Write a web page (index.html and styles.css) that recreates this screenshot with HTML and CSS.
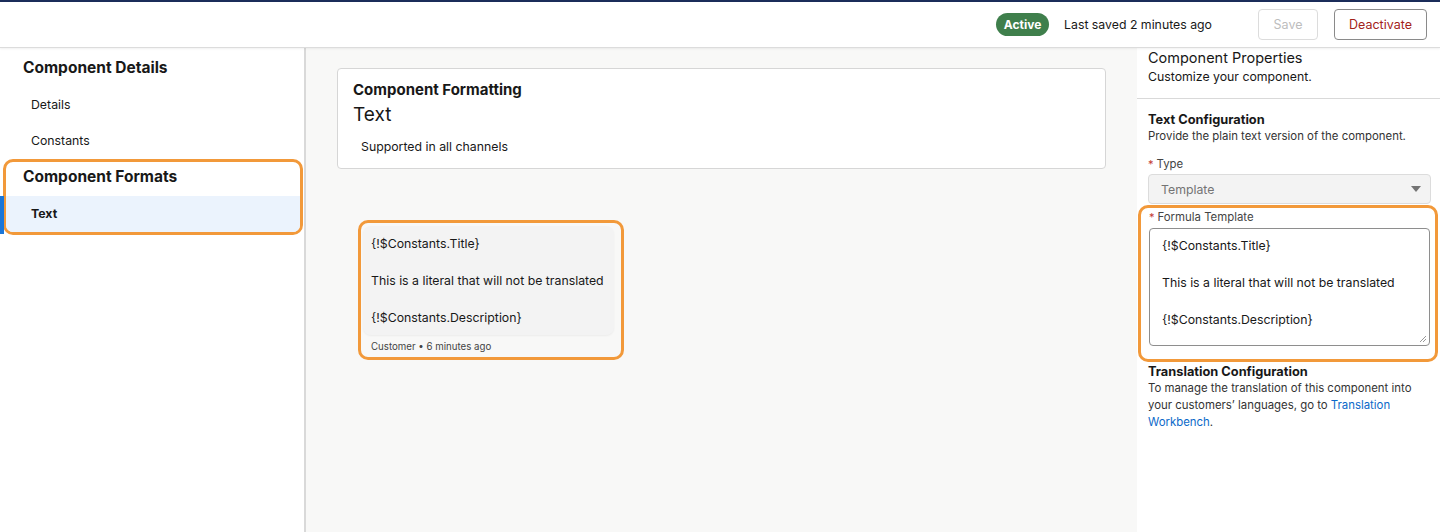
FILE: index.html
```html
<!DOCTYPE html>
<html lang="en">
<head>
    <meta charset="UTF-8">
    <meta name="viewport" content="width=device-width, initial-scale=1.0">
    <title>Component Builder</title>
    <link rel="stylesheet" href="styles.css">
</head>
<body>
    <div class="topbar"></div>
    <header class="header">
        <span class="badge">Active</span>
        <span class="saved">Last saved 2 minutes ago</span>
        <button class="btn btn-save" disabled>Save</button>
        <button class="btn btn-deactivate">Deactivate</button>
    </header>

    <div class="workspace">
        <aside class="sidebar">
            <h2 class="side-title">Component Details</h2>
            <a class="side-item">Details</a>
            <a class="side-item">Constants</a>
            <div class="highlight side-group">
                <h2 class="side-title">Component Formats</h2>
                <a class="side-item active">Text</a>
            </div>
        </aside>

        <main class="canvas">
            <section class="card">
                <h3 class="card-label">Component Formatting</h3>
                <div class="card-title">Text</div>
                <p class="card-note">Supported in all channels</p>
            </section>

            <div class="highlight preview">
                <div class="bubble">
                    <p>{!$Constants.Title}</p>
                    <p>This is a literal that will not be translated</p>
                    <p>{!$Constants.Description}</p>
                </div>
                <div class="bubble-meta">Customer &bull; 6 minutes ago</div>
            </div>
        </main>

        <aside class="props">
            <div class="props-head">
                <h2>Component Properties</h2>
                <p>Customize your component.</p>
            </div>
            <div class="props-body">
                <h3 class="section-title">Text Configuration</h3>
                <p class="section-text">Provide the plain text version of the component.</p>

                <label class="field-label"><span class="req">*</span>Type</label>
                <div class="select">
                    <span>Template</span>
                    <svg width="12" height="8" viewBox="0 0 12 8"><path d="M1 1h10L6 7z" fill="#747474"/></svg>
                </div>

                <div class="highlight formula">
                    <label class="field-label"><span class="req">*</span>Formula Template</label>
                    <div class="textarea">
                        <p>{!$Constants.Title}</p>
                        <p>This is a literal that will not be translated</p>
                        <p>{!$Constants.Description}</p>
                        <svg class="grip" width="8" height="8" viewBox="0 0 8 8"><path d="M7 1L1 7M7 4L4 7" stroke="#999" stroke-width="1"/></svg>
                    </div>
                </div>

                <h3 class="section-title">Translation Configuration</h3>
                <p class="section-text">To manage the translation of this component into your customers&rsquo; languages, go to <a class="link">Translation</a><br><a class="link">Workbench</a>.</p>
            </div>
        </aside>
    </div>
</body>
</html>
```

FILE: styles.css
```css
* {
    margin: 0;
    padding: 0;
    box-sizing: border-box;
}

body {
    font-family: Inter, "Liberation Sans", Arial, sans-serif;
    color: #181818;
    background-color: #fff;
    height: 532px;
    overflow: hidden;
}

.topbar {
    height: 2px;
    background-color: #1b2d5a;
}

.header {
    height: 46px;
    display: flex;
    align-items: center;
    justify-content: flex-end;
    padding-right: 13px;
    border-bottom: 1px solid #dcdcdc;
    box-shadow: 0 1px 2px rgba(0, 0, 0, 0.06);
    position: relative;
}

.badge {
    background-color: #3f7f4c;
    color: #fff;
    font-size: 12px;
    font-weight: 700;
    height: 23px;
    line-height: 23px;
    width: 53px;
    text-align: center;
    border-radius: 12px;
    margin-right: 15px;
}

.saved {
    font-size: 12.3px;
    margin-right: 46px;
}

.btn {
    font-family: inherit;
    font-size: 12.5px;
    height: 31px;
    border-radius: 4px;
    background-color: #fff;
    padding: 0;
}

.btn-save {
    border: 1px solid #dcdcdc;
    color: #bdbdbd;
    width: 60px;
    margin-right: 16px;
}

.btn-deactivate {
    border: 1px solid #8a8a8a;
    color: #a3221a;
    width: 93px;
}

.workspace {
    display: flex;
    height: 484px;
}

.sidebar {
    width: 306px;
    border-right: 2px solid #d9d9d9;
    padding-top: 9px;
}

.highlight {
    border: 3px solid #f2993a;
    border-radius: 10px;
}

.side-title {
    font-size: 15.5px;
    font-weight: 700;
    padding: 0 23px;
    height: 22px;
    line-height: 22px;
}

.side-item {
    display: block;
    font-size: 12.3px;
    padding: 0 31px;
    height: 36px;
    line-height: 36px;
}

.sidebar > .side-title + .side-item {
    margin-top: 8px;
}

.side-group {
    margin: 0 1px 0 3px;
    padding-top: 4px;
}

.side-group .side-title {
    padding-left: 17px;
    margin-bottom: 8px;
}

.side-item.active {
    background-color: #ebf3fd;
    font-weight: 700;
    padding-left: 25px;
    position: relative;
    border-radius: 0 0 7px 7px;
}

.side-item.active::before {
    content: "";
    position: absolute;
    left: -6px;
    top: 0;
    bottom: -2px;
    width: 4px;
    background-color: #1b76d8;
}

.canvas {
    flex: 1;
    background-color: #f8f8f7;
    padding: 20px 31px 0 31px;
}

.card {
    background-color: #fff;
    border: 1px solid #d6d6d6;
    border-radius: 4px;
    height: 101px;
    padding: 12px 15px;
}

.card-label {
    font-size: 15px;
    font-weight: 700;
    line-height: 18px;
}

.card-title {
    font-size: 19px;
    line-height: 26px;
    margin-top: 3px;
}

.card-note {
    font-size: 12.3px;
    padding-left: 8px;
    margin-top: 11px;
}

.preview {
    display: inline-block;
    width: 266px;
    margin: 51px 0 0 21px;
    padding: 3px 7px 4px 2px;
}

.bubble {
    background-color: #f3f3f3;
    border-radius: 8px;
    padding: 1px 8px 0;
    box-shadow: 0 1px 2px rgba(0, 0, 0, 0.05);
}

.bubble p {
    font-size: 12.3px;
    line-height: 34px;
    white-space: nowrap;
}

.bubble p + p {
    margin-top: 3px;
}

.bubble-meta {
    font-size: 9.7px;
    line-height: 12px;
    color: #444;
    padding: 6px 0 0 8px;
}

.props {
    width: 303px;
}

.props-head {
    padding: 0 11px 12px;
    border-bottom: 1px solid #d9d9d9;
}

.props-head h2 {
    font-size: 14.5px;
    font-weight: 400;
    line-height: 20px;
}

.props-head p {
    font-size: 12.3px;
    line-height: 18px;
}

.props-body {
    padding: 12px 9px 0 11px;
}

.section-title {
    font-size: 12.8px;
    font-weight: 700;
    line-height: 17px;
}

.section-text {
    font-size: 11.4px;
    line-height: 17px;
    color: #333;
}

.field-label {
    display: block;
    font-size: 11.4px;
    line-height: 16px;
    color: #444;
    margin-top: 11px;
}

.req {
    color: #c23934;
    margin-right: 3px;
    font-size: 11px;
}

.select {
    height: 30px;
    margin-top: 2px;
    background-color: #f3f3f3;
    border: 1px solid #dcdcdc;
    border-radius: 4px;
    display: flex;
    align-items: center;
    justify-content: space-between;
    padding: 0 8px 0 12px;
    font-size: 12.3px;
    color: #747474;
}

.formula {
    margin: 1px -7px 1px -10px;
    padding: 0 5px 13px 8px;
}

.formula .field-label {
    margin-top: 1px;
}

.textarea {
    position: relative;
    height: 118px;
    margin-top: 3px;
    border: 1px solid #8e8e8e;
    border-radius: 4px;
    padding: 7px 12px 0;
    background-color: #fff;
}

.textarea p {
    font-size: 12.3px;
    line-height: 20px;
    margin-bottom: 17px;
}

.grip {
    position: absolute;
    right: 2px;
    bottom: 2px;
}

.link {
    color: #0b69c9;
}
```
